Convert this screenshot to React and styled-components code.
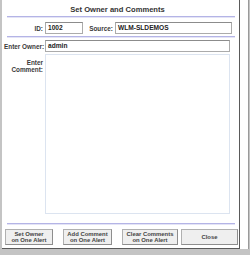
import React from 'react'
import styled, { createGlobalStyle } from 'styled-components'

const Global = createGlobalStyle`
  html, body { margin: 0; padding: 0; background: #c4c4c4; }
  body { font-family: "Liberation Sans", Arial, sans-serif; }
`;

const Frame = styled.div`
  width: 250px;
  height: 255px;
  background: #c4c4c4;
  box-sizing: border-box;
  padding-left: 2px;
  overflow: hidden;
`;

const Desk = styled.div`
  width: 247px;
  height: 249px;
  background: #fff;
  border-right: 1px solid #9a9a9a;
  box-sizing: border-box;
`;

const Dialog = styled.div`
  width: 238px;
  height: 249px;
  background: #fff;
  border-right: 1px solid #5a5a5a;
  border-bottom: 1px solid #5a5a5a;
  box-sizing: border-box;
  display: flex;
  flex-direction: column;
  padding: 5px 2px 0 2px;
`;

const Title = styled.div`
  font-size: 7.6px;
  font-weight: bold;
  color: #333;
  text-align: center;
  height: 10px;
  line-height: 10px;
  padding-right: 6px;
`;

const Rule = styled.div`
  height: 1px;
  background: #b4b4e6;
  margin: ${p => p.$m || '0'};
  margin-left: 3px;
  margin-right: 2px;
  box-shadow: 0 1px 0 #e4e4f6;
`;

const Row = styled.div`
  display: flex;
  align-items: center;
  gap: 1px;
  margin-top: ${p => p.$mt || 0}px;
`;

const Label = styled.div`
  font-size: 6.4px;
  font-weight: bold;
  color: #3a3a3a;
  text-align: right;
  width: ${p => p.$w}px;
  padding-right: 1px;
  box-sizing: border-box;
  line-height: 7px;
  align-self: ${p => (p.$top ? 'flex-start' : 'center')};
  padding-top: ${p => (p.$top ? '5px' : '0')};
  white-space: nowrap;
`;

const Field = styled.div`
  width: ${p => p.$w}px;
  height: 12px;
  border: 1px solid #ababab;
  border-top-color: #8c8c8c;
  box-sizing: border-box;
  font-size: 6.6px;
  font-weight: bold;
  color: #222;
  line-height: 10px;
  padding-left: 2px;
  background: #fff;
`;

const Area = styled.div`
  width: 185px;
  height: 160px;
  border: 1px solid #dce4f0;
  box-sizing: border-box;
  background: #fff;
`;

const Buttons = styled.div`
  display: grid;
  grid-template-columns: 58px 59px 59px 58px;
  justify-items: start;
  padding-left: 1px;
  margin-top: 5px;
`;

const Button = styled.button`
  width: ${p => p.$w}px;
  height: 16px;
  background: #efefef;
  border: 1px solid #8e8e8e;
  border-top-color: #b0b0b0;
  border-left-color: #b0b0b0;
  font-family: "Liberation Sans", Arial, sans-serif;
  font-size: 5.9px;
  font-weight: bold;
  color: #444;
  line-height: 6.5px;
  padding: 0;
  text-align: center;
`;

export default function App() {
  return (
    <>
      <Global />
      <Frame>
        <Desk>
          <Dialog>
            <Title>Set Owner and Comments</Title>
            <Rule $m="1px 0 0 0" />
            <Row $mt={5}>
              <Label $w={40}>ID:</Label>
              <Field $w={38}>1002</Field>
              <Label $w={30}>Source:</Label>
              <Field $w={117}>WLM-SLDEMOS</Field>
            </Row>
            <Rule $m="2px 0 0 0" />
            <Row $mt={3}>
              <Label $w={40}>Enter Owner:</Label>
              <Field $w={185}>admin</Field>
            </Row>
            <Row $mt={2}>
              <Label $w={40} $top>Enter<br />Comment:</Label>
              <Area />
            </Row>
            <Rule $m="9px 0 0 0" />
            <Buttons>
              <Button $w={48}>Set Owner<br />on One Alert</Button>
              <Button $w={49}>Add Comment<br />on One Alert</Button>
              <Button $w={56}>Clear Comments<br />on One Alert</Button>
              <Button $w={57}>Close</Button>
            </Buttons>
          </Dialog>
        </Desk>
      </Frame>
    </>
  )
}
